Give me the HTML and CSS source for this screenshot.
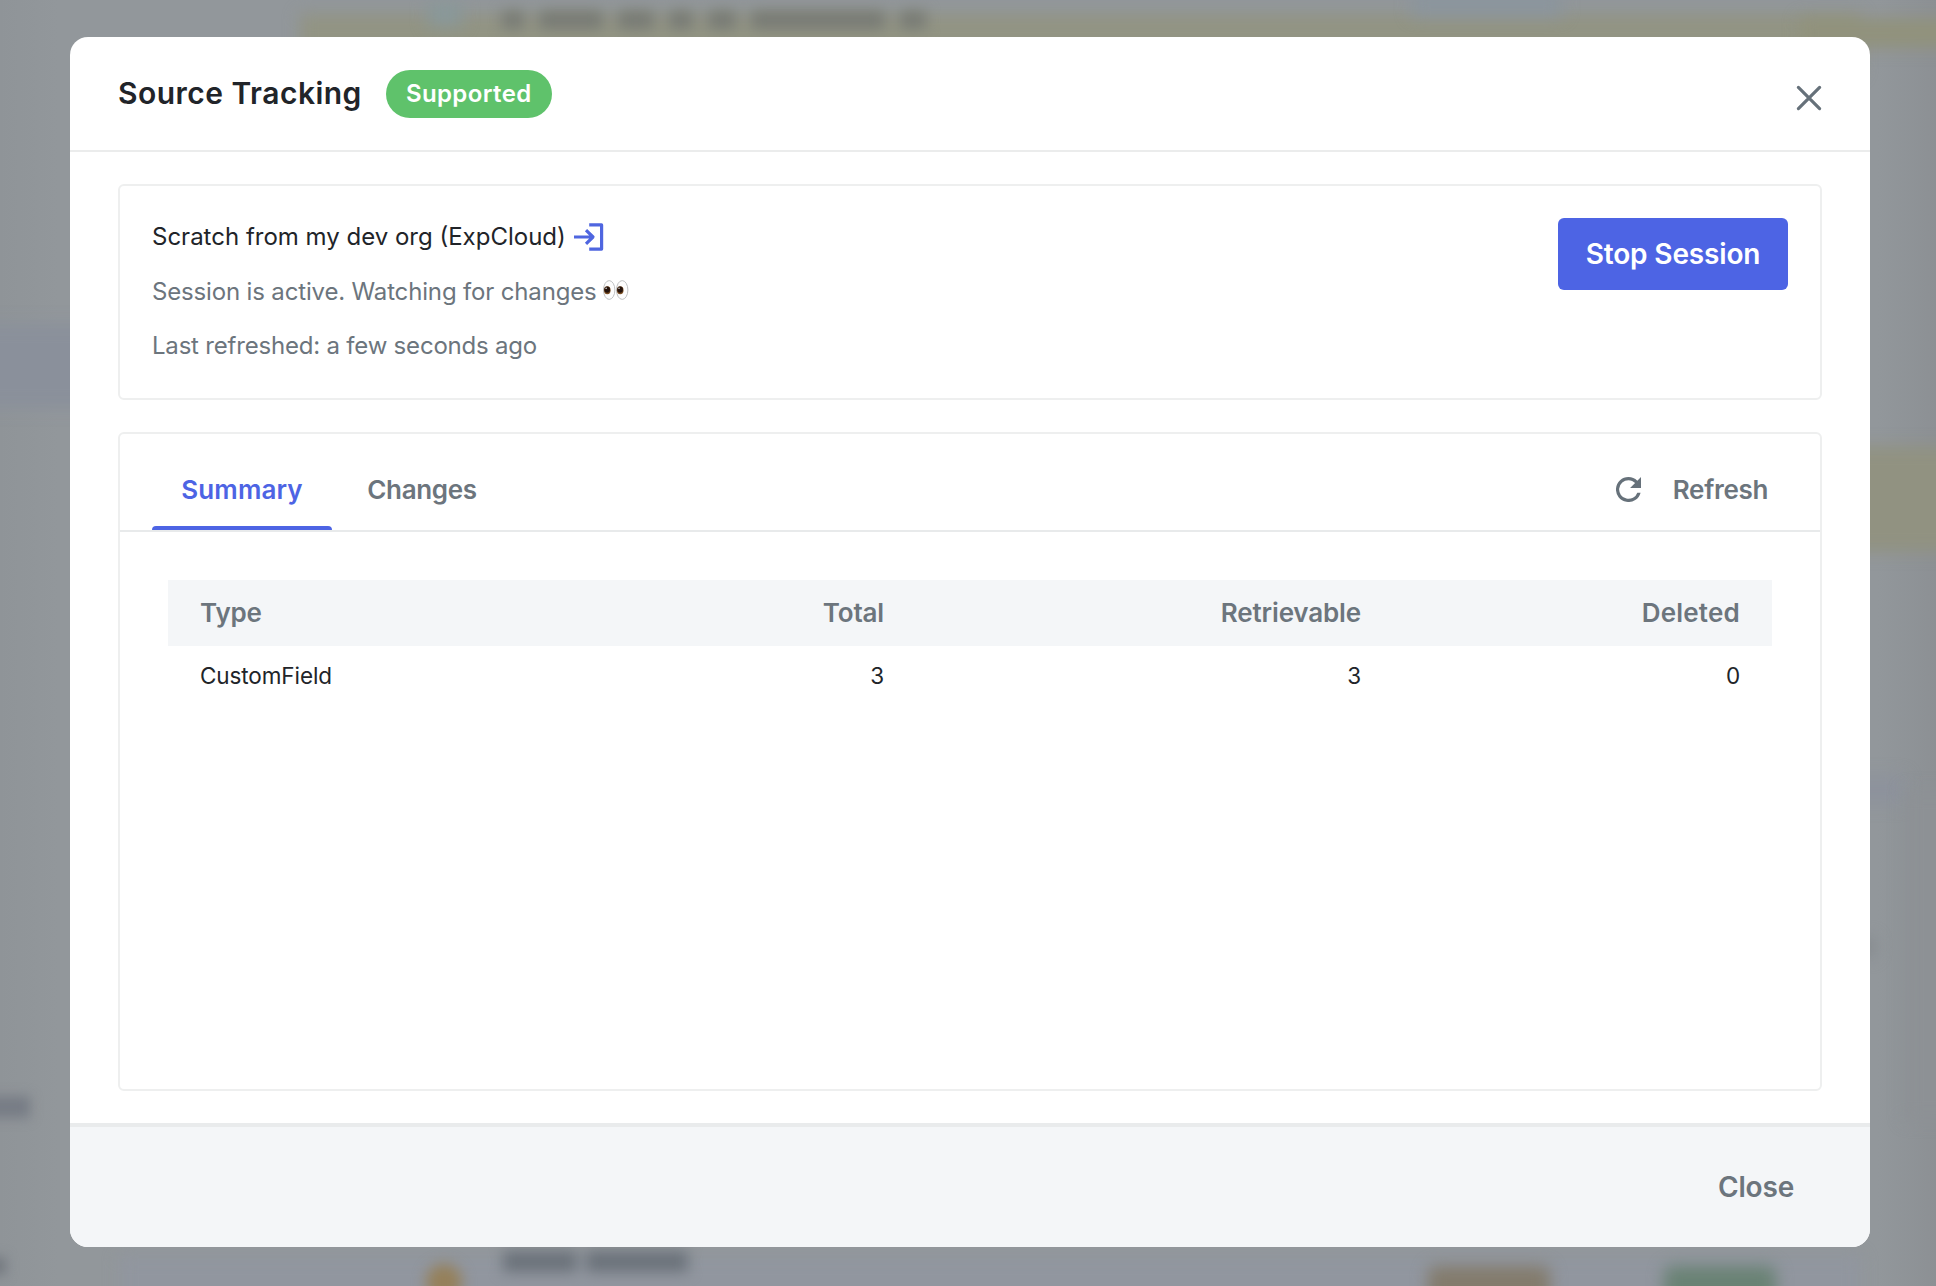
FILE: index.html
```html
<!DOCTYPE html>
<html lang="en">
<head>
<meta charset="utf-8">
<title>Source Tracking</title>
<link rel="stylesheet" href="styles.css">
</head>
<body>
<div class="backdrop" aria-hidden="true">
  <i class="blob row-bottom"></i>
  <i class="blob row-top"></i>
  <i class="blob row-top-end"></i>
  <i class="blob avatar"></i>
  <i class="blob chip"></i>
  <i class="words words-top"><b style="width:22px"></b><b style="width:64px"></b><b style="width:36px"></b><b style="width:24px"></b><b style="width:28px"></b><b style="width:134px"></b><b style="width:26px"></b></i>
  <i class="blob nav-active"></i>
  <i class="blob row-mid"></i>
  <i class="blob row-low"></i>
  <i class="blob panel"></i>
  <i class="blob nav-label"></i>
  <i class="blob nav-label-last"></i>
  <i class="blob mark"></i>
  <i class="blob dot"></i>
  <i class="words words-bottom"><b style="width:74px"></b><b style="width:102px"></b></i>
  <i class="blob tag tag-amber"></i>
  <i class="blob tag tag-green"></i>
</div>

<main class="modal">
  <header class="modal-header">
    <h1 class="title">Source Tracking</h1>
    <span class="badge">Supported</span>
    <button class="icon-button" aria-label="Dismiss">
      <svg width="28" height="28" viewBox="0 0 28 28"><path d="M3.4 3.4 24.6 24.6M24.6 3.4 3.4 24.6"/></svg>
    </button>
  </header>

  <div class="modal-body">
    <section class="card session">
      <div class="session-info">
        <p class="org">Scratch from my dev org (ExpCloud)
          <svg class="login-icon" width="30" height="28" viewBox="0 0 30 28"><path d="M15.2 1.9H27.6V26.1H15.2M0 14H19M12 7.2 19 14 12 20.8"/></svg>
        </p>
        <p class="muted status">Session is active. Watching for changes
          <svg class="eyes" width="26" height="20" viewBox="0 0 26 20">
            <ellipse class="eye" cx="6.2" cy="10" rx="5.7" ry="9.4"/><ellipse class="eye" cx="19.2" cy="10" rx="5.7" ry="9.4"/>
            <ellipse class="iris" cx="4.3" cy="10.2" rx="3.3" ry="4"/><ellipse class="iris" cx="17.2" cy="10.2" rx="3.3" ry="4"/>
            <ellipse class="pupil" cx="4.2" cy="9.6" rx="2.8" ry="3.2"/><ellipse class="pupil" cx="17.1" cy="9.6" rx="2.8" ry="3.2"/>
            <circle class="glint" cx="3.1" cy="8.2" r=".7"/><circle class="glint" cx="16" cy="8.2" r=".7"/>
          </svg>
        </p>
        <p class="muted refreshed">Last refreshed: a few seconds ago</p>
      </div>
      <button class="primary">Stop Session</button>
    </section>

    <section class="card results">
      <nav class="tabs">
        <button class="tab active">Summary</button>
        <button class="tab">Changes</button>
        <button class="refresh">
          <svg width="25" height="25" viewBox="4 4 16 16"><path d="M17.65 6.35A7.958 7.958 0 0 0 12 4a8 8 0 1 0 7.73 10h-2.08A5.99 5.99 0 1 1 12 6c1.66 0 3.14.69 4.22 1.78L13 11h7V4z"/></svg>
          Refresh
        </button>
      </nav>
      <table class="summary">
        <colgroup><col class="c-type"><col class="c-total"><col class="c-retrievable"><col class="c-deleted"></colgroup>
        <thead><tr><th>Type</th><th>Total</th><th>Retrievable</th><th class="deleted">Deleted</th></tr></thead>
        <tbody><tr><td>CustomField</td><td>3</td><td>3</td><td>0</td></tr></tbody>
      </table>
    </section>
  </div>

  <footer class="modal-footer"><button class="close">Close</button></footer>
</main>
</body>
</html>
```

FILE: styles.css
```css
* { box-sizing: border-box; }

body {
  margin: 0;
  width: 1936px;
  height: 1286px;
  padding: 37px 66px 39px 70px;
  overflow: hidden;
  background: #92979b;
  color: #212429;
  font: 400 24px "Inter", sans-serif;
}

button {
  border: 0;
  padding: 0;
  background: none;
  font: inherit;
  letter-spacing: inherit;
  color: inherit;
}

h1, p { margin: 0; }

/* Blurred page behind the dialog */
.backdrop {
  position: absolute;
  inset: 0;
  overflow: hidden;
  background: linear-gradient(90deg, #8f9498, #92979b 3%, #92979b 97%, #8c9094);
}
.blob { position: absolute; filter: blur(8px); }
.row-bottom { left: 120px; top: 1256px; width: 1740px; height: 60px; background: #91969f; }
.row-top { left: 300px; top: 14px; width: 1560px; height: 60px; background: #929483; }
.row-top-end { left: 1800px; top: 18px; width: 160px; height: 30px; background: #91927c; }
.avatar { left: 428px; top: 2px; width: 34px; height: 24px; background: #89989a; }
.chip { left: 1412px; top: -10px; width: 150px; height: 26px; background: #8b959d; }
.nav-active { left: -20px; top: 324px; width: 120px; height: 84px; background: #8a909b; }
.row-mid { left: 1820px; top: 446px; width: 150px; height: 106px; background: #919281; }
.row-low { left: 1820px; top: 776px; width: 84px; height: 28px; background: #8d929c; }
.panel { left: 1905px; top: 790px; width: 60px; height: 330px; background: #8d9195; }
.nav-label { left: -20px; top: 1096px; width: 50px; height: 22px; background: #777c85; filter: blur(6px); }
.nav-label-last { left: -20px; top: 1257px; width: 26px; height: 18px; background: #747980; filter: blur(6px); }
.mark { left: 1858px; top: 938px; width: 16px; height: 18px; background: #83888c; }
.dot { left: 426px; top: 1264px; width: 36px; height: 36px; border-radius: 50%; background: #95805a; filter: blur(7px); }
.tag { height: 50px; border-radius: 8px; top: 1266px; }
.tag-amber { left: 1428px; width: 122px; background: #837b6c; }
.tag-green { left: 1664px; width: 112px; background: #698274; }
.words { position: absolute; display: flex; gap: 9px; filter: blur(7px); }
.words b { height: 18px; background: #777a74; }
.words-top { left: 502px; top: 11px; gap: 15px; }
.words-bottom { left: 503px; top: 1251px; }
.words-bottom b { height: 21px; background: #6b727a; }

.modal {
  position: relative;
  display: flex;
  flex-direction: column;
  height: 1210px;
  border-radius: 18px;
  overflow: hidden;
  background: #fff;
}

.modal-header {
  display: flex;
  align-items: center;
  height: 115px;
  padding: 0 47px 0 48px;
  border-bottom: 2px solid #ebecec;
}
.title {
  margin-top: -2px;
  font-size: 30px;
  font-weight: 560;
  letter-spacing: .48px;
}
.badge {
  height: 48px;
  margin-left: 24px;
  padding: 0 20px;
  border-radius: 24px;
  background: #5fc26b;
  color: #fff;
  font-weight: 600;
  line-height: 48px;
  letter-spacing: .4px;
}
.icon-button { height: 28px; margin: 9px 0 0 auto; line-height: 0; }
.icon-button path { fill: none; stroke: #66717a; stroke-width: 3.2; stroke-linecap: round; }

.modal-body {
  flex: 1;
  display: flex;
  flex-direction: column;
  gap: 32px;
  padding: 32px 48px;
}
.card { border: 2px solid #eeefef; border-radius: 6px; }

.session {
  display: flex;
  justify-content: space-between;
  align-items: flex-start;
  height: 216px;
  padding: 32px;
}
.session-info { margin-top: -8px; line-height: 54.5px; white-space: nowrap; }
.session-info p { display: flex; align-items: center; }
.login-icon { margin-left: 8px; }
.login-icon path { fill: none; stroke: #4f66e0; stroke-width: 3.2; stroke-linejoin: round; }
.muted { color: #6c757d; }
.status { letter-spacing: -.16px; }
.refreshed { letter-spacing: -.2px; }
.eyes { margin: -3px 0 0 6px; }
.eye { fill: #fdfdfd; stroke: #bfc1c2; stroke-width: 1; }
.iris { fill: #7a4d22; }
.pupil { fill: #24130c; }
.glint { fill: #fff; }
.primary {
  width: 230px;
  height: 72px;
  border-radius: 6px;
  background: #4d64e4;
  color: #fff;
  font-size: 28px;
  font-weight: 560;
  letter-spacing: -.15px;
}

.results { flex: 1; }
.tabs {
  display: flex;
  height: 98px;
  padding: 14px 52px 0 32px;
  border-bottom: 2px solid #e8eaeb;
  color: #6c757d;
  font-size: 26px;
  font-weight: 560;
  letter-spacing: -.32px;
}
.tab { position: relative; width: 180px; }
.active { color: #4d64e4; letter-spacing: .1px; }
.active::after {
  content: "";
  position: absolute;
  left: 0;
  right: 0;
  bottom: 0;
  height: 4px;
  border-radius: 4px 4px 0 0;
  background: #4d64e4;
}
.refresh { display: flex; align-items: center; gap: 32px; margin-left: auto; }
.refresh svg { fill: #66717a; }

.summary {
  width: 1604px;
  margin: 48px;
  border-collapse: collapse;
  table-layout: fixed;
  text-align: right;
}
.c-type { width: 432px; }
.c-total { width: 316px; }
.c-retrievable { width: 477px; }
.c-deleted { width: 379px; }
.summary th {
  height: 66px;
  padding: 0 32px 1px;
  background: #f4f6f8;
  color: #6c757d;
  font-size: 26px;
  font-weight: 560;
  letter-spacing: -.15px;
}
.summary td { height: 58px; padding: 0 32px; font-size: 22.5px; letter-spacing: -.1px; }
.summary tr > :first-child { text-align: left; }
.summary .deleted { letter-spacing: .2px; }

.modal-footer {
  display: flex;
  justify-content: flex-end;
  align-items: center;
  height: 124px;
  padding-right: 76px;
  border-top: 4px solid #e9ebec;
  background: #f4f6f8;
}
.close { padding-bottom: 1px; color: #6c757d; font-size: 28px; font-weight: 560; letter-spacing: -.2px; }
```
